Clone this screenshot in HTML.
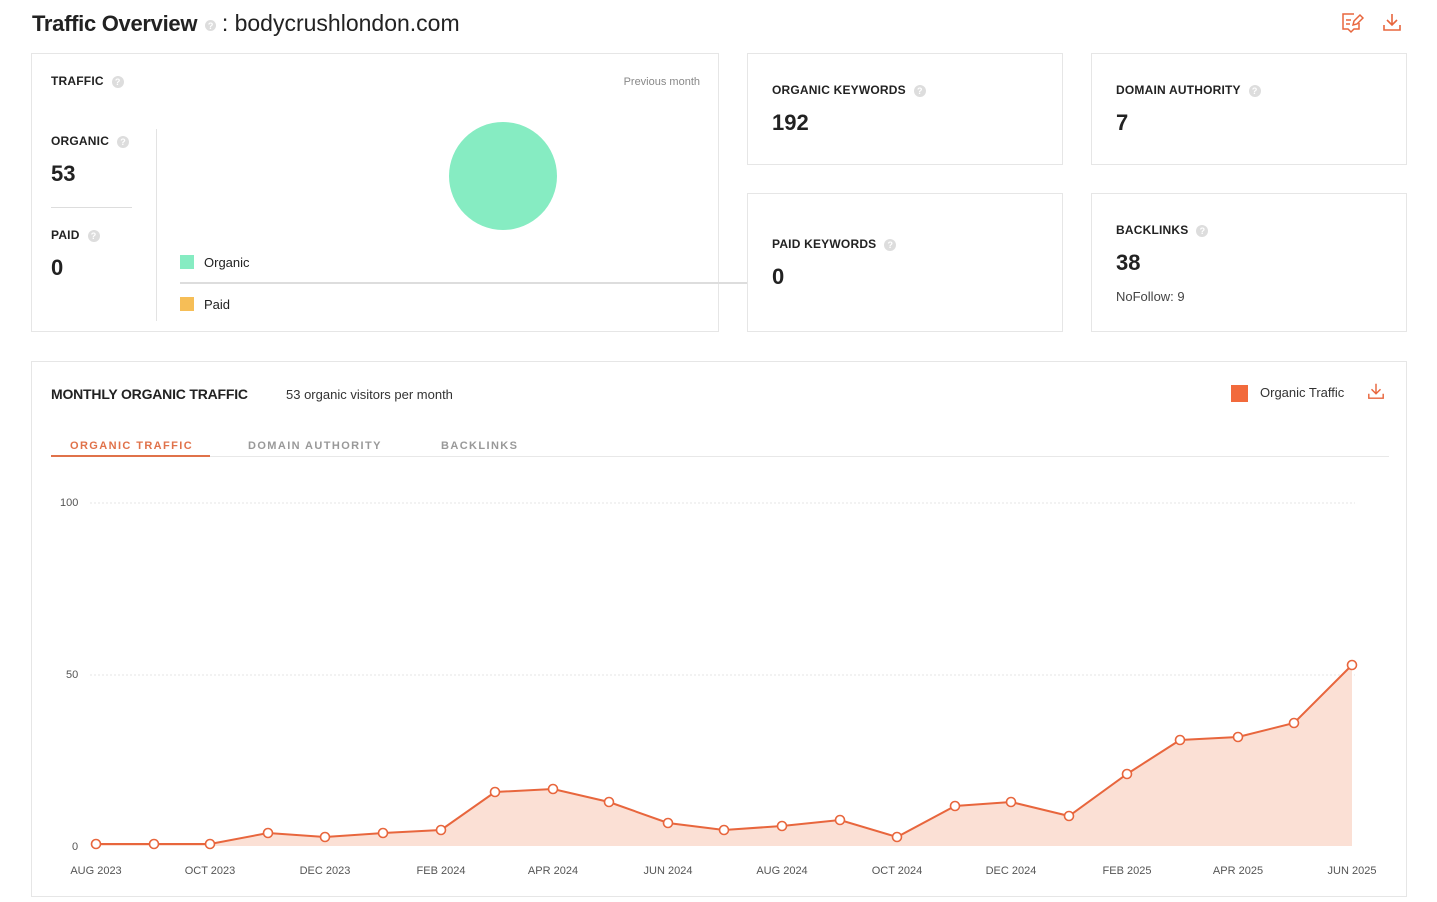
<!DOCTYPE html>
<html><head><meta charset="utf-8"><style>
*{box-sizing:border-box;margin:0;padding:0}
body{width:1437px;height:902px;background:#fff;font-family:"Liberation Sans",sans-serif;color:#222;position:relative;overflow:hidden}
.a{position:absolute}
.card{position:absolute;border:1px solid #e6e6e6;background:#fff}
.lbl{font-size:12px;font-weight:bold;color:#222;letter-spacing:0.2px}
.q{display:inline-block;width:12px;height:12px;border-radius:50%;background:#ddd;vertical-align:middle;margin-left:8px;color:#fff;font-size:9px;text-align:center;line-height:12px}
.big{font-size:22px;font-weight:bold;color:#222}
.tab{font-size:11px;font-weight:bold;letter-spacing:1.4px}
</style></head><body>
<div class="a" style="left:32px;top:10px;font-size:22px;font-weight:bold;letter-spacing:-0.3px">Traffic Overview <span class="q" style="margin-left:2px;width:11px;height:11px">?</span> <span style="font-weight:normal;font-size:23px;letter-spacing:0">: bodycrushlondon.com</span></div>
<svg class="a" style="left:1340px;top:12px" width="24" height="22" viewBox="0 0 24 22" fill="none" stroke="#e8663d" stroke-width="1.5"><path d="M14 2H3v15h5l3 3 3-3h5v-6"/><path d="M6 8h5M6 12h4"/><path d="M13 13l1-4 6-6 3 3-6 6z"/></svg>
<svg class="a" style="left:1382px;top:12px" width="20" height="20" viewBox="0 0 20 20" fill="none" stroke="#e8663d" stroke-width="1.6"><path d="M10 2v11M5 8l5 5 5-5M2 13v5h16v-5"/></svg>

<div class="card" style="left:31px;top:53px;width:688px;height:279px">
 <div class="a lbl" style="left:19px;top:20px">TRAFFIC<span class="q">?</span></div>
 <div class="a" style="right:18px;top:22px;font-size:11px;color:#888">Previous month</div>
 <div class="a lbl" style="left:19px;top:80px">ORGANIC<span class="q">?</span></div>
 <div class="a big" style="left:19px;top:107px">53</div>
 <div class="a" style="left:19px;top:153px;width:81px;height:1px;background:#ddd"></div>
 <div class="a lbl" style="left:19px;top:174px">PAID<span class="q">?</span></div>
 <div class="a big" style="left:19px;top:201px">0</div>
 <div class="a" style="left:124px;top:75px;width:1px;height:192px;background:#e3e3e3"></div>
 <div class="a" style="left:417px;top:68px;width:108px;height:108px;border-radius:50%;background:#86ecc2"></div>
 <div class="a" style="left:148px;top:201px;width:14px;height:14px;background:#86ecc2"></div>
 <div class="a" style="left:172px;top:201px;font-size:13px">Organic</div>
 <div class="a" style="left:148px;top:228px;width:568px;height:2px;background:#ddd"></div>
 <div class="a" style="left:148px;top:243px;width:14px;height:14px;background:#f6be57"></div>
 <div class="a" style="left:172px;top:243px;font-size:13px">Paid</div>
</div>

<div class="card" style="left:747px;top:53px;width:316px;height:112px">
 <div class="a lbl" style="left:24px;top:29px">ORGANIC KEYWORDS<span class="q">?</span></div>
 <div class="a big" style="left:24px;top:56px">192</div>
</div>
<div class="card" style="left:1091px;top:53px;width:316px;height:112px">
 <div class="a lbl" style="left:24px;top:29px">DOMAIN AUTHORITY<span class="q">?</span></div>
 <div class="a big" style="left:24px;top:56px">7</div>
</div>
<div class="card" style="left:747px;top:193px;width:316px;height:139px">
 <div class="a lbl" style="left:24px;top:43px">PAID KEYWORDS<span class="q">?</span></div>
 <div class="a big" style="left:24px;top:70px">0</div>
</div>
<div class="card" style="left:1091px;top:193px;width:316px;height:139px">
 <div class="a lbl" style="left:24px;top:29px">BACKLINKS<span class="q">?</span></div>
 <div class="a big" style="left:24px;top:56px">38</div>
 <div class="a" style="left:24px;top:95px;font-size:13px;color:#444">NoFollow: 9</div>
</div>

<div class="card" style="left:31px;top:361px;width:1376px;height:536px">
 <div class="a" style="left:19px;top:24px;font-size:14px;font-weight:bold;letter-spacing:-0.2px">MONTHLY ORGANIC TRAFFIC</div>
 <div class="a" style="left:254px;top:25px;font-size:13px;color:#333">53 organic visitors per month</div>
 <div class="a" style="left:1199px;top:23px;width:17px;height:17px;background:#f26a3c"></div>
 <div class="a" style="left:1228px;top:23px;font-size:13px;color:#333">Organic Traffic</div>
 <svg class="a" style="left:1335px;top:20px" width="18" height="18" viewBox="0 0 20 20" fill="none" stroke="#e8663d" stroke-width="1.6"><path d="M10 2v11M5 8l5 5 5-5M2 13v5h16v-5"/></svg>
 <div class="a tab" style="left:38px;top:78px;color:#e0724a">ORGANIC TRAFFIC</div>
 <div class="a tab" style="left:216px;top:78px;color:#999">DOMAIN AUTHORITY</div>
 <div class="a tab" style="left:409px;top:78px;color:#999">BACKLINKS</div>
 <div class="a" style="left:19px;top:94px;width:1338px;height:1px;background:#e8e8e8"></div>
 <div class="a" style="left:19px;top:93px;width:159px;height:2px;background:#e0724a"></div>
</div>

<svg class="a" style="left:0;top:0" width="1437" height="902">
 <g stroke="#e6e6e6" stroke-dasharray="2,2"><line x1="90" y1="503" x2="1355" y2="503"/><line x1="90" y1="675" x2="1355" y2="675"/></g>
 <g font-family="Liberation Sans" font-size="11" fill="#555"><text x="60" y="506">100</text><text x="66" y="678">50</text><text x="72" y="850">0</text></g>
 <polygon fill="#fbe0d5" points="96,846 96,844 154,844 210,844 268,833 325,837 383,833 441,830 495,792 553,789 609,802 668,823 724,830 782,826 840,820 897,837 955,806 1011,802 1069,816 1127,774 1180,740 1238,737 1294,723 1352,665 1352,846"/>
 <polyline fill="none" stroke="#e8663d" stroke-width="2" points="96,844 154,844 210,844 268,833 325,837 383,833 441,830 495,792 553,789 609,802 668,823 724,830 782,826 840,820 897,837 955,806 1011,802 1069,816 1127,774 1180,740 1238,737 1294,723 1352,665"/>
 <g fill="#fff" stroke="#e8663d" stroke-width="1.6">
 <circle cx="96" cy="844" r="4.5"/><circle cx="154" cy="844" r="4.5"/><circle cx="210" cy="844" r="4.5"/><circle cx="268" cy="833" r="4.5"/><circle cx="325" cy="837" r="4.5"/><circle cx="383" cy="833" r="4.5"/><circle cx="441" cy="830" r="4.5"/><circle cx="495" cy="792" r="4.5"/><circle cx="553" cy="789" r="4.5"/><circle cx="609" cy="802" r="4.5"/><circle cx="668" cy="823" r="4.5"/><circle cx="724" cy="830" r="4.5"/><circle cx="782" cy="826" r="4.5"/><circle cx="840" cy="820" r="4.5"/><circle cx="897" cy="837" r="4.5"/><circle cx="955" cy="806" r="4.5"/><circle cx="1011" cy="802" r="4.5"/><circle cx="1069" cy="816" r="4.5"/><circle cx="1127" cy="774" r="4.5"/><circle cx="1180" cy="740" r="4.5"/><circle cx="1238" cy="737" r="4.5"/><circle cx="1294" cy="723" r="4.5"/><circle cx="1352" cy="665" r="4.5"/>
 </g>
 <g font-family="Liberation Sans" font-size="11" fill="#555" text-anchor="middle">
 <text x="96" y="874">AUG 2023</text><text x="210" y="874">OCT 2023</text><text x="325" y="874">DEC 2023</text><text x="441" y="874">FEB 2024</text><text x="553" y="874">APR 2024</text><text x="668" y="874">JUN 2024</text><text x="782" y="874">AUG 2024</text><text x="897" y="874">OCT 2024</text><text x="1011" y="874">DEC 2024</text><text x="1127" y="874">FEB 2025</text><text x="1238" y="874">APR 2025</text><text x="1352" y="874">JUN 2025</text>
 </g>
</svg>
</body></html>
